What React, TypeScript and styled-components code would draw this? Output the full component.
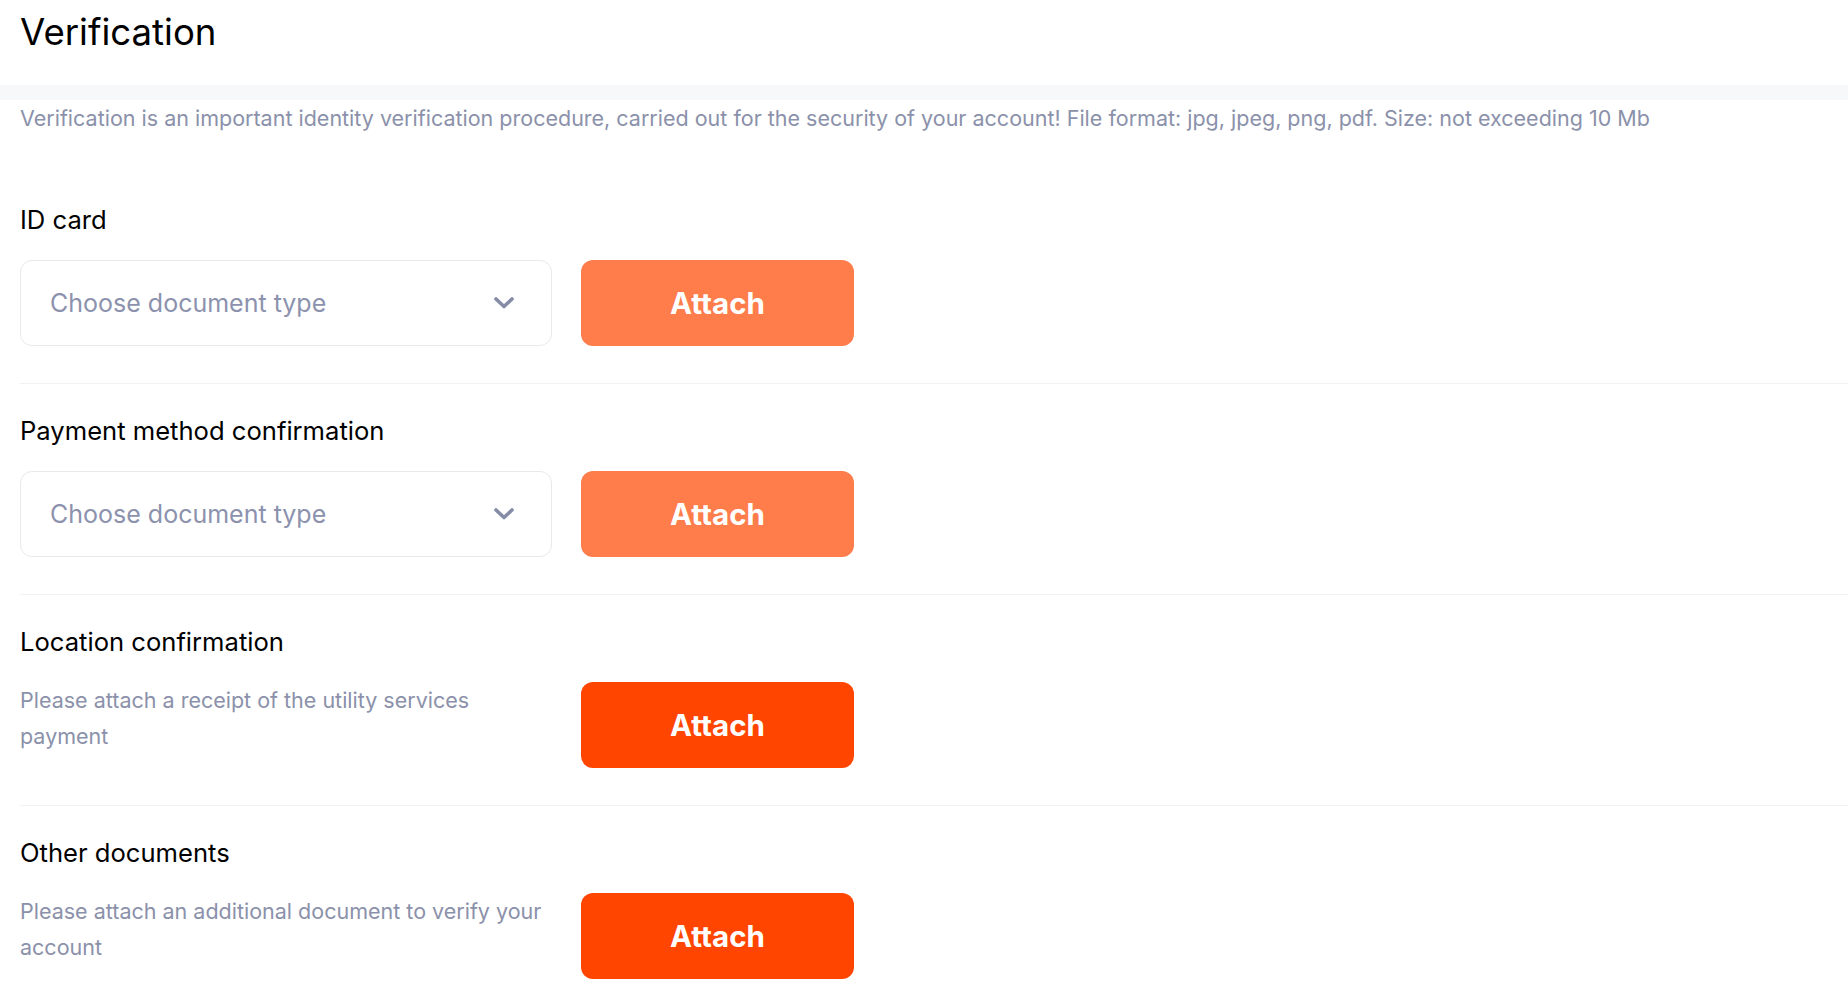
import styled, { createGlobalStyle } from 'styled-components';

const GlobalStyle = createGlobalStyle`
  html, body {
    margin: 0;
    padding: 0;
    background: #fff;
    font-family: Inter, "Noto Sans", "Liberation Sans", sans-serif;
  }
  * {
    box-sizing: border-box;
  }
`;

type Section = {
  title: string;
  kind: 'select' | 'text';
  text?: string;
  disabled: boolean;
};

const sections: Section[] = [
  { title: 'ID card', kind: 'select', disabled: true },
  { title: 'Payment method confirmation', kind: 'select', disabled: true },
  {
    title: 'Location confirmation',
    kind: 'text',
    text: 'Please attach a receipt of the utility services payment',
    disabled: false,
  },
  {
    title: 'Other documents',
    kind: 'text',
    text: 'Please attach an additional document to verify your account',
    disabled: false,
  },
];

const Chevron = () => (
  <svg width='22' height='14' viewBox='0 0 22 14' fill='none'>
    <path d='M3 3 L11 10.5 L19 3' stroke='#858ca6' strokeWidth='3.6' strokeLinecap='round' strokeLinejoin='round' />
  </svg>
);

const App = () => {
  return (
    <Page>
      <GlobalStyle />
      <Header>
        <h1 className='title'>Verification</h1>
      </Header>
      <Band />
      <Content>
        <Intro>
          Verification is an important identity verification procedure, carried out for the security of your
          account! File format: jpg, jpeg, png, pdf. Size: not exceeding 10 Mb
        </Intro>
        {sections.map(section => (
          <Block key={section.title}>
            <Label>{section.title}</Label>
            <Row>
              {section.kind === 'select' ? (
                <Select type='button'>
                  <span>Choose document type</span>
                  <Chevron />
                </Select>
              ) : (
                <Hint>{section.text}</Hint>
              )}
              <AttachButton type='button' $disabled={section.disabled}>
                Attach
              </AttachButton>
            </Row>
          </Block>
        ))}
      </Content>
    </Page>
  );
};

const Page = styled.div`
  width: 100%;
  min-height: 100vh;
  background: #fff;
`;

const Header = styled.div`
  height: 85px;
  padding: 9px 20px 0;

  .title {
    margin: 0;
    font-size: 36.6px;
    line-height: 46px;
    font-weight: 400;
    color: #000;
  }
`;

const Band = styled.div`
  height: 15px;
  background: #f7f8fa;
`;

const Content = styled.div`
  padding: 0 0 0 20px;
`;

const Intro = styled.p`
  margin: 2px 0 39px;
  font-size: 21.5px;
  line-height: 32px;
  color: #8b91aa;
`;

const Block = styled.section`
  padding: 31px 0 37px;
  border-bottom: 1px solid #f1f2f4;

  &:last-of-type {
    border-bottom: none;
  }
`;

const Label = styled.div`
  font-size: 25.6px;
  line-height: 32px;
  font-weight: 400;
  color: #000;
  margin-bottom: 24px;
`;

const Row = styled.div`
  display: flex;
  align-items: flex-start;
  gap: 29px;
`;

const Select = styled.button`
  display: flex;
  align-items: center;
  justify-content: space-between;
  width: 532px;
  height: 86px;
  padding: 0 36px 0 29px;
  border: 1px solid #e7e9ed;
  border-radius: 12px;
  background: #fff;
  font-family: inherit;
  font-size: 25px;
  color: #8c92ad;
  cursor: pointer;
`;

const Hint = styled.p`
  width: 532px;
  margin: 0;
  font-size: 21.5px;
  line-height: 36px;
  color: #8b91aa;
`;

const AttachButton = styled.button<{ $disabled: boolean }>`
  width: 273px;
  height: 86px;
  border: none;
  border-radius: 12px;
  background: #ff4500;
  opacity: ${p => (p.$disabled ? 0.7 : 1)};
  color: #fff;
  font-family: inherit;
  font-size: 29.5px;
  font-weight: 700;
  cursor: pointer;
`;

export default App;
